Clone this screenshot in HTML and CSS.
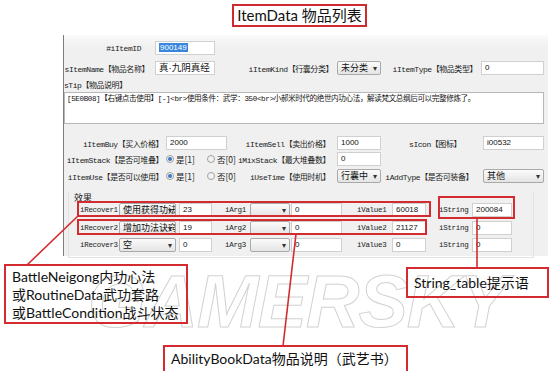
FILE: index.html
```html
<!DOCTYPE html>
<html>
<head>
    <title>ItemData 物品列表</title>
    <link rel="stylesheet" href="styles.css">
</head>
<body>
    <div class="page">
        <div class="watermark">GAMERSKY</div>

        <div class="title">ItemData 物品列表</div>

        <div class="panel">
            <div class="row row-a">
                <span class="lbl w77">#iItemID</span>
                <span class="field ml14 w60"><span class="sel-text">900149</span></span>
            </div>

            <div class="row row-b">
                <span class="lbl w85">sItemName【物品名称】</span>
                <span class="field ml6 w60 big">真·九阴真经</span>
                <span class="lbl w118">iItemKind【行囊分类】</span>
                <span class="combo ml4 w44">未分类</span>
                <span class="lbl w96">iItemType【物品类型】</span>
                <span class="field ml4 w63">0</span>
            </div>

            <div class="tip-label lbl">sTip【物品说明】</div>
            <div class="textarea">[5E0B08]【右键点击使用】[-]&lt;br&gt;使用条件：武学：350&lt;br&gt;小郝米时代的绝世内功心法，解读梵文总纲后可以完整修炼了。</div>

            <div class="row row-d">
                <span class="lbl w99">iItemBuy【买入价格】</span>
                <span class="field ml3 w61">2000</span>
                <span class="lbl w103">iItemSell【卖出价格】</span>
                <span class="field ml7 w44">1000</span>
                <span class="lbl w80">sIcon【图标】</span>
                <span class="field ml22 w61">i00532</span>
            </div>

            <div class="row row-e">
                <span class="lbl w99">iItemStack【是否可堆叠】</span>
                <span class="radios ml3">
                    <span class="radio on"></span><span class="rtext">是[1]</span>
                    <span class="radio"></span><span class="rtext">否[0]</span>
                </span>
                <span class="lbl w97">iMixStack【最大堆叠数】</span>
                <span class="field ml7 w44">0</span>
            </div>

            <div class="row row-f">
                <span class="lbl w99">iItemUse【是否可以使用】</span>
                <span class="radios ml3">
                    <span class="radio on"></span><span class="rtext">是[1]</span>
                    <span class="radio"></span><span class="rtext">否[0]</span>
                </span>
                <span class="lbl w97">iUseTime【使用时机】</span>
                <span class="combo ml7 w44">行囊中</span>
                <span class="lbl w92">iAddType【是否可装备】</span>
                <span class="combo ml10 w61">其他</span>
            </div>

            <div class="group">
                <div class="legend">效果</div>

                <div class="grow">
                    <span class="glbl">iRecover1</span>
                    <span class="combo w57">使用获得功法</span>
                    <span class="field ml3 w33">23</span>
                    <span class="glbl ml13 w25">iArg1</span>
                    <span class="combo w40"></span>
                    <span class="field ml1 w51">0</span>
                    <span class="glbl ml15 w35">iValue1</span>
                    <span class="field w34">60018</span>
                    <span class="glbl ml13 w33">iString</span>
                    <span class="field w40">200084</span>
                </div>

                <div class="grow">
                    <span class="glbl">iRecover2</span>
                    <span class="combo w57">增加功法诀窍</span>
                    <span class="field ml3 w33">19</span>
                    <span class="glbl ml13 w25">iArg2</span>
                    <span class="combo w40"></span>
                    <span class="field ml1 w51">0</span>
                    <span class="glbl ml15 w35">iValue2</span>
                    <span class="field w34">21127</span>
                    <span class="glbl ml13 w33">iString</span>
                    <span class="field w40">0</span>
                </div>

                <div class="grow">
                    <span class="glbl">iRecover3</span>
                    <span class="combo w57">空</span>
                    <span class="field ml3 w33">0</span>
                    <span class="glbl ml13 w25">iArg3</span>
                    <span class="combo w40"></span>
                    <span class="field ml1 w51">0</span>
                    <span class="glbl ml15 w35">iValue3</span>
                    <span class="field w34">0</span>
                    <span class="glbl ml13 w33">iString</span>
                    <span class="field w40">0</span>
                </div>
            </div>
        </div>

        <!-- annotation overlay -->
        <div class="mark mark-r1"></div>
        <div class="mark mark-r2"></div>
        <div class="mark mark-str"></div>

        <svg class="lines" width="550" height="371">
            <line x1="79" y1="215" x2="27" y2="265" />
            <line x1="296" y1="234" x2="283" y2="346" />
            <line x1="477" y1="218" x2="477" y2="268" />
        </svg>

        <div class="callout callout-left">
            BattleNeigong内功心法<br>
            或RoutineData武功套路<br>
            或BattleCondition战斗状态
        </div>
        <div class="callout callout-book">AbilityBookData物品说明（武艺书）</div>
        <div class="callout callout-str">String_table提示语</div>
    </div>
</body>
</html>
```

FILE: styles.css
```css
* {
    margin: 0;
    padding: 0;
    box-sizing: border-box;
}

body {
    background: #fff;
    font-family: "Liberation Sans", "Noto Sans CJK SC", sans-serif;
    color: #111;
}

.page {
    position: relative;
    width: 550px;
    height: 371px;
    overflow: hidden;
}

.title {
    width: 135px;
    height: 23px;
    margin: 4px 0 0 232px;
    border: 2px solid #cf2a2f;
    font-family: Lato, "Noto Sans CJK SC", sans-serif;
    font-size: 15px;
    line-height: 19px;
    text-align: center;
    white-space: nowrap;
    position: relative;
    z-index: 2;
}

.panel {
    width: 485px;
    height: 221px;
    margin: 8px 0 0 63px;
    padding-top: 6px;
    background: linear-gradient(#fafafa, #f0f0f0 12px);
    border-left: 1px solid #7d7d7d;
}

.row {
    display: flex;
    align-items: center;
    height: 14px;
}

.row-b { margin-top: 6px; }
.row-d { margin-top: 12px; }
.row-e { margin-top: 2px; }
.row-f { margin-top: 3px; }

.lbl {
    font-family: "Liberation Mono", "Noto Sans CJK SC", monospace;
    font-size: 8px;
    letter-spacing: -0.45px;
    color: #222;
    text-align: right;
    white-space: nowrap;
    flex-shrink: 0;
}

.tip-label {
    text-align: left;
    margin-top: 5px;
    height: 11px;
    line-height: 11px;
}

.field,
.combo {
    height: 14px;
    flex-shrink: 0;
    font-size: 8px;
    line-height: 12px;
    white-space: nowrap;
    overflow: hidden;
}

.field {
    background: #fff;
    border: 1px solid #d0d0d0;
    padding-left: 3px;
}

.field.big {
    font-size: 9.5px;
}

.sel-text {
    background: #3b86dd;
    color: #fff;
    padding: 0 1px;
}

.combo {
    position: relative;
    background: linear-gradient(#fbfbfb, #e4e4e4);
    border: 1px solid #a9a9a9;
    border-radius: 2px;
    padding-left: 3px;
    font-size: 9px;
    font-family: "Noto Sans CJK SC", sans-serif;
}

.combo::after {
    content: "▾";
    position: absolute;
    right: 3px;
    top: 0;
    font-size: 8px;
    color: #333;
}

.textarea {
    width: 480px;
    height: 32px;
    margin-top: 1px;
    background: #fff;
    border: 1px solid #b8b8b8;
    padding: 1px 2px;
    font-family: "Liberation Mono", "Noto Sans CJK SC", monospace;
    font-size: 7.6px;
    letter-spacing: -0.4px;
    line-height: 11px;
    white-space: nowrap;
    overflow: hidden;
}

.radios {
    display: flex;
    align-items: center;
    width: 67px;
    flex-shrink: 0;
    white-space: nowrap;
}

.radio {
    width: 8px;
    height: 8px;
    flex-shrink: 0;
    border-radius: 50%;
    border: 1px solid #a0a0a0;
    background: #f2f2f2;
    margin-right: 2px;
    position: relative;
}

.radio.on::after {
    content: "";
    position: absolute;
    left: 1px;
    top: 1px;
    width: 4px;
    height: 4px;
    border-radius: 50%;
    background: #3a78c8;
}

.rtext {
    flex-shrink: 0;
    font-size: 8.5px;
    font-family: "Noto Sans CJK SC", sans-serif;
    margin-right: 12px;
    color: #222;
}

.group {
    width: 466px;
    height: 66px;
    margin: 9px 0 0 4px;
    border: 1px solid #e2e2e2;
    border-top: none;
}

.legend {
    font-size: 9px;
    font-family: "Noto Sans CJK SC", sans-serif;
    padding-left: 5px;
    height: 11px;
    line-height: 11px;
    color: #222;
}

.grow {
    display: flex;
    align-items: center;
    height: 14px;
    margin-top: 3.5px;
    padding-left: 11px;
}

.legend + .grow {
    margin-top: 0;
}

.glbl {
    width: 39px;
    flex-shrink: 0;
    font-family: "Liberation Mono", monospace;
    font-size: 7.5px;
    letter-spacing: -0.3px;
    color: #222;
}

/* widths and gaps */
.w25 { width: 25px; }
.w33 { width: 33px; }
.w34 { width: 34px; }
.w35 { width: 35px; }
.w40 { width: 40px; }
.w44 { width: 44px; }
.w51 { width: 51px; }
.w57 { width: 57px; }
.w60 { width: 60px; }
.w61 { width: 61px; }
.w63 { width: 63px; }
.w77 { width: 77px; }
.w80 { width: 80px; }
.w85 { width: 85px; }
.w92 { width: 92px; }
.w96 { width: 96px; }
.w97 { width: 97px; }
.w99 { width: 99px; }
.w103 { width: 103px; }
.w118 { width: 118px; }

.ml1 { margin-left: 1px; }
.ml3 { margin-left: 3px; }
.ml4 { margin-left: 4px; }
.ml6 { margin-left: 6px; }
.ml7 { margin-left: 7px; }
.ml10 { margin-left: 10px; }
.ml13 { margin-left: 13px; }
.ml14 { margin-left: 14px; }
.ml15 { margin-left: 15px; }
.ml22 { margin-left: 22px; }

/* annotations */
.mark {
    position: absolute;
    border: 2px solid #d42b30;
}

.mark-r1 { left: 77px; top: 201px; width: 354px; height: 16px; }
.mark-r2 { left: 77px; top: 219px; width: 350px; height: 16px; }
.mark-str { left: 438px; top: 196px; width: 77px; height: 23px; }

.lines {
    position: absolute;
    left: 0;
    top: 0;
}

.lines line {
    stroke: #d42b30;
    stroke-width: 1.6;
}

.callout {
    position: absolute;
    border: 2px solid #d42b30;
    font-family: Lato, "Noto Sans CJK SC", sans-serif;
    font-size: 14px;
    color: #111;
    white-space: nowrap;
}

.callout-left {
    left: 4px;
    top: 264px;
    width: 184px;
    height: 60px;
    padding: 2px 0 0 6px;
    line-height: 18px;
}

.callout-book {
    left: 163px;
    top: 345px;
    width: 245px;
    height: 30px;
    padding: 2px 0 0 6px;
    line-height: 20px;
}

.callout-str {
    left: 406px;
    top: 267px;
    width: 143px;
    height: 31px;
    padding: 3px 0 0 6px;
    line-height: 21px;
}

.watermark {
    position: absolute;
    left: 88px;
    top: 265px;
    font-family: "Liberation Sans", sans-serif;
    font-weight: bold;
    font-style: italic;
    font-size: 74px;
    line-height: 74px;
    color: #fff;
    -webkit-text-stroke: 1px #d2d2d2;
    letter-spacing: -1px;
}
```
